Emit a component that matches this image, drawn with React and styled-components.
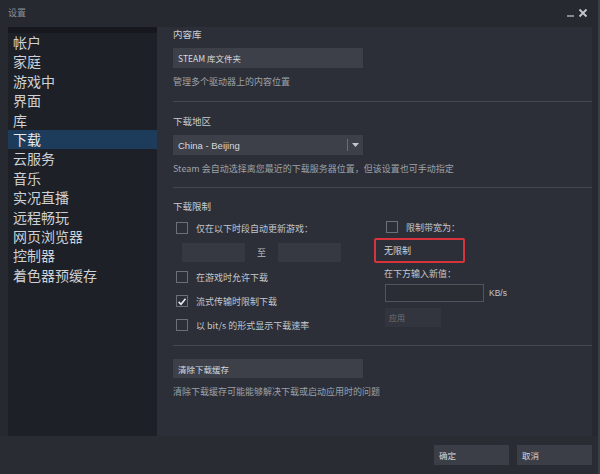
import styled, { createGlobalStyle } from 'styled-components';

const GlobalStyle = createGlobalStyle`
  html, body {
    margin: 0;
    padding: 0;
    background: #25282f;
  }
  * {
    box-sizing: border-box;
  }
`;

const Window = styled.div`
  width: 600px;
  height: 474px;
  display: flex;
  flex-direction: column;
  background: #262930;
  font-family: "Noto Sans CJK SC", "Liberation Sans", sans-serif;
  color: #c7cbd1;
  border-right: 2px solid #3a3e46;
  overflow: hidden;
`;

const TitleBar = styled.div`
  height: 27px;
  display: flex;
  align-items: center;
  justify-content: space-between;
  padding: 0 8px 2px 8px;
  font-size: 9px;
  color: #8a8f98;
`;

const WinControls = styled.div`
  display: flex;
  align-items: center;
  gap: 3px;
  color: #b0b4ba;
  margin-right: 2px;
`;

const Main = styled.div`
  display: flex;
  height: 409px;
  padding: 0 6px 0 8px;
`;

const Sidebar = styled.nav`
  width: 149px;
  background: #1d2026;
  border-top: 6px solid #16181d;
  display: flex;
  flex-direction: column;
`;

const NavItem = styled.div`
  height: 19.4px;
  line-height: 19.4px;
  padding-left: 5px;
  font-size: 14px;
  color: ${(p) => (p.$active ? '#e6e9ed' : '#cdd1d6')};
  background: ${(p) => (p.$active ? '#1d3b5a' : 'transparent')};
  white-space: nowrap;
`;

const Content = styled.section`
  flex: 1;
  background: #2c2f37;
  padding: 0 0 0 16px;
  display: flex;
  flex-direction: column;
`;

const Heading = styled.div`
  font-size: 9.5px;
  color: #c9cdd3;
  height: 14px;
  line-height: 14px;
  margin-top: ${(p) => p.$top || 0}px;
`;

const WideButton = styled.div`
  width: 190px;
  height: ${(p) => p.$h || 20}px;
  margin-top: ${(p) => p.$top || 7}px;
  background: #3d4049;
  font-size: 8.5px;
  color: #d6d9de;
  display: flex;
  align-items: center;
  padding-left: 5px;
`;

const Caption = styled.div`
  font-size: 9px;
  color: #9da1a9;
  height: 14px;
  line-height: 14px;
  margin-top: 7px;
  white-space: nowrap;
`;

const Divider = styled.div`
  height: 1px;
  background: #434750;
  margin-top: ${(p) => p.$top || 12}px;
`;

const Select = styled.div`
  width: 190px;
  height: 20px;
  margin-top: 7px;
  background: #3d4049;
  display: flex;
  align-items: center;
  font-size: 9.5px;
  color: #d6d9de;
`;

const SelectLabel = styled.div`
  flex: 1;
  padding-left: 5px;
  font-family: "Liberation Sans", sans-serif;
`;

const SelectArrow = styled.div`
  width: 16px;
  height: 12px;
  border-left: 1px solid #6a6e76;
  display: flex;
  align-items: center;
  justify-content: center;
`;

const LimitGrid = styled.div`
  display: flex;
  margin-top: 4px;
`;

const LeftCol = styled.div`
  width: 201px;
  display: flex;
  flex-direction: column;
`;

const RightCol = styled.div`
  display: flex;
  flex-direction: column;
`;

const CheckRow = styled.div`
  display: flex;
  align-items: center;
  height: 14px;
  margin-top: ${(p) => p.$top || 0}px;
  padding-left: ${(p) => p.$indent ?? 3}px;
  font-size: 9px;
  color: #c3c7cd;
  white-space: nowrap;
`;

const Box = styled.div`
  width: 12px;
  height: 12px;
  border: 1px solid #6b6f77;
  margin-right: 8px;
  display: flex;
  align-items: center;
  justify-content: center;
`;

const TimeRow = styled.div`
  display: flex;
  align-items: center;
  margin-top: 8px;
  padding-left: 9px;
  font-size: 9px;
  color: #b5b9bf;
`;

const TimeInput = styled.div`
  width: 63px;
  height: 19px;
  background: #363941;
`;

const To = styled.div`
  width: 33px;
  text-align: center;
`;

const Highlight = styled.div`
  width: 91px;
  height: 25px;
  margin-top: 4px;
  border: 2px solid #d8333a;
  border-radius: 2px;
  font-size: 9px;
  color: #d0d4d9;
  display: flex;
  align-items: center;
  padding-left: 8px;
`;

const Label = styled.div`
  font-size: 9px;
  color: #c3c7cd;
  margin-top: 4px;
  padding-left: 10px;
  height: 14px;
  line-height: 14px;
`;

const InputRow = styled.div`
  display: flex;
  align-items: center;
  margin-top: 3px;
  padding-left: 11px;
`;

const RateInput = styled.div`
  width: 99px;
  height: 18px;
  background: #2a2d34;
  border: 1px solid #50545c;
`;

const Unit = styled.div`
  font-size: 8.5px;
  color: #c3c7cd;
  margin-left: 5px;
  font-family: "Liberation Sans", sans-serif;
`;

const ApplyButton = styled.div`
  width: 56px;
  height: 19px;
  margin: 6px 0 0 11px;
  background: #32353d;
  font-size: 8px;
  color: #6f737b;
  display: flex;
  align-items: center;
  padding-left: 4px;
`;

const Footer = styled.div`
  flex: 1;
  display: flex;
  justify-content: flex-end;
  align-items: flex-start;
  gap: 8px;
  padding: 9px 6px 0 0;
  background: #292c33;
`;

const FooterButton = styled.div`
  width: 75px;
  height: 20px;
  background: #3b3e47;
  font-size: 8.5px;
  color: #d4d7dc;
  display: flex;
  align-items: center;
  padding-left: 5px;
`;

const Check = () => (
  <svg width="11" height="11" viewBox="0 0 12 12">
    <path d="M2 6.5 L4.8 9.3 L10.2 2.8" fill="none" stroke="#e8eaed" strokeWidth="2" />
  </svg>
);

const navItems = [
  '帐户',
  '家庭',
  '游戏中',
  '界面',
  '库',
  '下载',
  '云服务',
  '音乐',
  '实况直播',
  '远程畅玩',
  '网页浏览器',
  '控制器',
  '着色器预缓存'
];

export default function App() {
  return (
    <>
      <GlobalStyle />
      <Window>
        <TitleBar>
          <span>设置</span>
          <WinControls>
            <svg width="9" height="9" viewBox="0 0 9 9">
              <path d="M1 8 H8" stroke="#b0b4ba" strokeWidth="1.4" />
            </svg>
            <svg width="10" height="10" viewBox="0 0 10 10">
              <path d="M1.5 1.5 L8.5 8.5 M8.5 1.5 L1.5 8.5" stroke="#c4c8cd" strokeWidth="1.8" />
            </svg>
          </WinControls>
        </TitleBar>
        <Main>
          <Sidebar>
            {navItems.map((item) => (
              <NavItem key={item} $active={item === '下载'}>
                {item}
              </NavItem>
            ))}
          </Sidebar>
          <Content>
            <Heading>内容库</Heading>
            <WideButton $top={7}>STEAM 库文件夹</WideButton>
            <Caption>管理多个驱动器上的内容位置</Caption>
            <Divider $top={12} />
            <Heading $top={12}>下载地区</Heading>
            <Select>
              <SelectLabel>China - Beijing</SelectLabel>
              <SelectArrow>
                <svg width="7" height="4" viewBox="0 0 7 4">
                  <path d="M0 0 H7 L3.5 4 Z" fill="#c4c8cd" />
                </svg>
              </SelectArrow>
            </Select>
            <Caption>Steam 会自动选择离您最近的下载服务器位置，但该设置也可手动指定</Caption>
            <Divider $top={11} />
            <Heading $top={11}>下载限制</Heading>
            <LimitGrid>
              <LeftCol>
                <CheckRow $top={4}>
                  <Box />
                  仅在以下时段自动更新游戏：
                </CheckRow>
                <TimeRow>
                  <TimeInput />
                  <To>至</To>
                  <TimeInput />
                </TimeRow>
                <CheckRow $top={8}>
                  <Box />
                  在游戏时允许下载
                </CheckRow>
                <CheckRow $top={10}>
                  <Box>
                    <Check />
                  </Box>
                  流式传输时限制下载
                </CheckRow>
                <CheckRow $top={10}>
                  <Box />
                  以 bit/s 的形式显示下载速率
                </CheckRow>
              </LeftCol>
              <RightCol>
                <CheckRow $top={3} $indent={12}>
                  <Box />
                  限制带宽为：
                </CheckRow>
                <Highlight>无限制</Highlight>
                <Label>在下方输入新值：</Label>
                <InputRow>
                  <RateInput />
                  <Unit>KB/s</Unit>
                </InputRow>
                <ApplyButton>应用</ApplyButton>
              </RightCol>
            </LimitGrid>
            <Divider $top={13} />
            <WideButton $top={13} $h={19}>清除下载缓存</WideButton>
            <Caption>清除下载缓存可能能够解决下载或启动应用时的问题</Caption>
          </Content>
        </Main>
        <Footer>
          <FooterButton>确定</FooterButton>
          <FooterButton>取消</FooterButton>
        </Footer>
      </Window>
    </>
  );
}
